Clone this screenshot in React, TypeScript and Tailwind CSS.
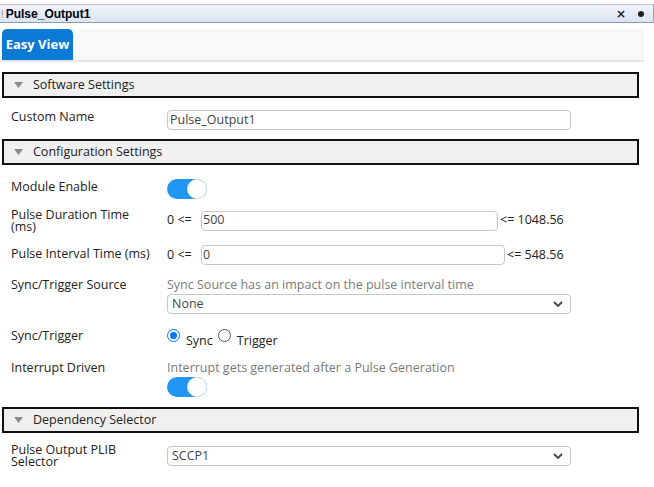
import React from "react";

const font = { fontFamily: '"Open Sans", "Noto Sans", sans-serif' };

function SectionHeader({ title, className = "" }: { title: string; className?: string }) {
  return (
    <div
      className={`ml-[2px] w-[637px] h-[26px] border-2 border-[#111] bg-[#f0f0f0] flex items-center ${className}`}
    >
      <svg width="9" height="6" viewBox="0 0 9 6" className="ml-[10px]">
        <path d="M0 0 L9 0 L4.5 6 Z" fill="#8a8a8a" />
      </svg>
      <span className="ml-[10px] text-[12.5px] text-[#222] leading-none">{title}</span>
    </div>
  );
}

function Toggle() {
  return (
    <div className="w-[40px] h-[20px] rounded-full bg-[#2196f3] relative">
      <div className="absolute right-0 top-0 w-[20px] h-[20px] rounded-full bg-white border border-[#e8e8e8]" />
    </div>
  );
}

function Chevron() {
  return (
    <svg width="10" height="6" viewBox="0 0 10 6" className="mr-[7px]">
      <path d="M1 1 L5 5 L9 1" stroke="#444" strokeWidth="1.8" fill="none" />
    </svg>
  );
}

function Radio({ checked }: { checked?: boolean }) {
  return checked ? (
    <div className="w-[13px] h-[13px] rounded-full border-[1.5px] border-[#0075ff] flex items-center justify-center">
      <div className="w-[7px] h-[7px] rounded-full bg-[#0075ff]" />
    </div>
  ) : (
    <div className="w-[13px] h-[13px] rounded-full border border-[#555] bg-white" />
  );
}

export default function App() {
  return (
    <div className="w-[654px] h-[487px] bg-white overflow-hidden text-[#222]" style={font}>
      {/* Title bar */}
      <div className="mt-[4px] w-[654px] h-[19px] border-t border-[#c4c4c4] border-r border-r-[#9aa7b8] border-b border-b-[#8d9bb0] bg-gradient-to-b from-[#f1f4fb] to-[#dce4f3] flex items-center">
        <span className="ml-[1px] text-[#888] text-[10px] leading-none tracking-[-1px]">⁞</span>
        <span
          className="ml-[3px] text-[12px] font-bold text-black leading-none"
          style={{ fontFamily: '"Liberation Sans", Arial, sans-serif' }}
        >
          Pulse_Output1
        </span>
        <div className="ml-auto flex items-center">
          <span className="text-[12px] font-bold text-[#222] leading-none" style={{ fontFamily: '"DejaVu Sans", sans-serif' }}>
            ×
          </span>
          <div className="ml-[12px] mr-[9px] w-[6px] h-[6px] rounded-full bg-[#222]" />
        </div>
      </div>

      {/* Tab strip */}
      <div className="mt-[6px] w-[644px] h-[33px] bg-[#f7f8fa] border-b-2 border-[#e3e5e8] flex items-end">
        <div className="ml-[2px] w-[71px] h-[31px] rounded-t-[5px] bg-[#0a7ad4] flex items-center justify-center">
          <span className="text-white text-[13px] font-bold leading-none">Easy View</span>
        </div>
      </div>

      <SectionHeader title="Software Settings" className="mt-[10px]" />

      {/* Custom Name */}
      <div className="mt-[12px] flex items-center h-[20px]">
        <div className="w-[167px] pl-[11px] text-[12.5px] -mt-[6px]">Custom Name</div>
        <div className="w-[404px] h-[20px] border border-[#c8c8c8] rounded-[4px] flex items-center pl-[2px] text-[12.5px] text-[#444]">
          Pulse_Output1
        </div>
      </div>

      <SectionHeader title="Configuration Settings" className="mt-[9px]" />

      {/* Module Enable */}
      <div className="mt-[14px] flex items-center h-[20px]">
        <div className="w-[167px] pl-[11px] text-[12.5px] -mt-[3px]">Module Enable</div>
        <Toggle />
      </div>

      {/* Pulse Duration */}
      <div className="mt-[11px] flex items-center h-[21px]">
        <div className="w-[167px] pl-[11px] text-[12.5px] leading-[12px] pt-[1px]">
          Pulse Duration Time
          <br />
          (ms)
        </div>
        <span className="text-[12.5px] w-[34px]">0 &lt;=</span>
        <div className="w-[297px] h-[20px] border border-[#c8c8c8] rounded-[4px] flex items-center pl-[1px] text-[12.5px] text-[#444]">
          500
        </div>
        <span className="ml-[2px] text-[12.5px]">&lt;= 1048.56</span>
      </div>

      {/* Pulse Interval */}
      <div className="mt-[14px] flex items-center h-[20px]">
        <div className="w-[167px] pl-[11px] text-[12.5px] -mt-[2px]">Pulse Interval Time (ms)</div>
        <span className="text-[12.5px] w-[34px]">0 &lt;=</span>
        <div className="w-[304px] h-[20px] border border-[#c8c8c8] rounded-[4px] flex items-center pl-[1px] text-[12.5px] text-[#444]">
          0
        </div>
        <span className="ml-[2px] text-[12.5px]">&lt;= 548.56</span>
      </div>

      {/* Sync/Trigger Source */}
      <div className="mt-[12px] flex">
        <div className="w-[167px] pl-[11px] text-[12.5px] leading-[16px]">Sync/Trigger Source</div>
        <div className="flex flex-col">
          <span className="text-[12.5px] text-[#7a7a7a] leading-[16px]">Sync Source has an impact on the pulse interval time</span>
          <div className="mt-[1px] w-[404px] h-[20px] border border-[#c8c8c8] rounded-[4px] flex items-center pl-[4px] text-[12.5px] text-[#444]">
            <span className="flex-1">None</span>
            <Chevron />
          </div>
        </div>
      </div>

      {/* Sync/Trigger */}
      <div className="mt-[14px] flex items-start h-[22px]">
        <div className="w-[167px] pl-[11px] text-[12.5px] leading-[16px]">Sync/Trigger</div>
        <div className="flex items-start pt-[1px]">
          <Radio checked />
          <span className="ml-[6px] mt-[5px] text-[12.5px] leading-[14px]">Sync</span>
          <div className="ml-[5px]">
            <Radio />
          </div>
          <span className="ml-[6px] mt-[5px] text-[12.5px] leading-[14px]">Trigger</span>
        </div>
      </div>

      {/* Interrupt Driven */}
      <div className="mt-[10px] flex">
        <div className="w-[167px] pl-[11px] text-[12.5px] leading-[16px]">Interrupt Driven</div>
        <div className="flex flex-col">
          <span className="text-[12.5px] text-[#7a7a7a] leading-[16px]">Interrupt gets generated after a Pulse Generation</span>
          <div className="mt-[1px]">
            <Toggle />
          </div>
        </div>
      </div>

      <SectionHeader title="Dependency Selector" className="mt-[10px]" />

      {/* PLIB Selector */}
      <div className="mt-[13px] flex items-center h-[20px]">
        <div className="w-[167px] pl-[11px] text-[12.5px] leading-[12px]">
          Pulse Output PLIB
          <br />
          Selector
        </div>
        <div className="w-[404px] h-[20px] border border-[#c8c8c8] rounded-[4px] flex items-center pl-[4px] text-[12.5px] text-[#444]">
          <span className="flex-1">SCCP1</span>
          <Chevron />
        </div>
      </div>
    </div>
  );
}
